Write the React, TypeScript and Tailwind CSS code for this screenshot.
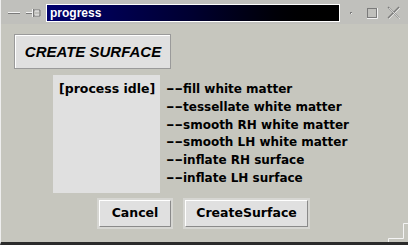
import React from "react";

const body = { fontFamily: '"DejaVu Sans", Verdana, sans-serif' };
const sans = { fontFamily: '"Liberation Sans", Arial, sans-serif' };

const steps = [
  "fill white matter",
  "tessellate white matter",
  "smooth RH white matter",
  "smooth LH white matter",
  "inflate RH surface",
  "inflate LH surface",
];

const BevelButton = ({ label, width }: { label: string; width: string }) => {
  return (
    <div className={`p-[2px] bg-[#d6d6d2] ${width}`}>
      <div className="h-[27px] flex items-center justify-center bg-[#e0e0e0] border-t border-l border-white border-r border-b border-r-[#8a8a8a] border-b-[#8a8a8a] text-[12.5px] font-bold text-black">
        {label}
      </div>
    </div>
  );
};

const App = () => {
  return (
    <div
      className="relative w-[408px] h-[245px] overflow-hidden flex flex-col bg-[#c0c0bc] border-l border-l-[#eeeeee] border-b-[3px] border-b-[#2b2b2b]"
      style={body}
    >
      {/* title bar */}
      <div className="h-[24px] flex items-start pt-[4px] shrink-0">
        <div className="w-[45px] h-[18px] flex items-center">
          <svg width="45" height="18" viewBox="0 0 45 18">
            <rect x="7" y="8" width="12" height="1" fill="#f2f2f2" />
            <rect x="7" y="9" width="12" height="1" fill="#7a7a7a" />
            <rect x="25" y="8" width="7" height="1" fill="#f2f2f2" />
            <rect x="25" y="9" width="7" height="1" fill="#7a7a7a" />
            <rect x="31" y="5" width="2" height="8" fill="#7a7a7a" />
            <rect x="31" y="5" width="1" height="8" fill="#f2f2f2" />
            <path d="M33 6 H39 V12 H33" fill="none" stroke="#7a7a7a" strokeWidth="1" />
            <path d="M34 7 H38 M34 11 H38" stroke="#f2f2f2" strokeWidth="1" />
          </svg>
        </div>
        <div
          className="w-[294px] h-[18px] border border-white bg-gradient-to-r from-[#00006e] via-[#000030] to-[#000000] flex items-center pl-[3px] text-white text-[12px] font-bold"
          style={sans}
        >
          progress
        </div>
        <div className="flex-1 h-[18px]">
          <svg width="67" height="18" viewBox="0 0 67 18">
            <rect x="10" y="8" width="2" height="2" fill="#7a7a7a" />
            <rect x="11" y="9" width="1" height="1" fill="#f2f2f2" />
            <rect x="27.5" y="4.5" width="9" height="9" fill="none" stroke="#7a7a7a" />
            <path d="M27 14.5 H37.5 V4" fill="none" stroke="#f2f2f2" />
            <path d="M48 3 L59 14 M59 3 L48 14" stroke="#7a7a7a" strokeWidth="1.3" />
            <path d="M49 4 L60 15 M60 4 L49 15" stroke="#f2f2f2" strokeWidth="0.7" />
          </svg>
        </div>
      </div>

      {/* body */}
      <div className="flex-1 bg-[#c6c6be] pl-[13px] pt-[10px] text-black">
        <div className="w-[157px] h-[35px] border border-[#9a9a9a] bg-[#e0e0e0]">
          <div
            className="h-full flex items-center justify-center border-t border-l border-white text-[15px] font-bold italic"
            style={sans}
          >
            CREATE SURFACE
          </div>
        </div>

        <div className="flex items-start mt-[6px]">
          <div className="ml-[39px] w-[107px] h-[118px] bg-[#e0e0e0] pl-[6px] pt-[6px] text-[12.5px] leading-[15px] font-bold">
            [process idle]
          </div>
          <div className="ml-[6px] pt-[6px] text-[12px] leading-[17.8px] font-bold">
            {steps.map((s) => (
              <div key={s}>
                <span className="inline-block w-[17px] origin-left scale-x-[1.7]">--</span>
                {s}
              </div>
            ))}
          </div>
        </div>

        <div className="flex mt-[5px] ml-[83px] gap-[10px]">
          <BevelButton label="Cancel" width="w-[76px]" />
          <BevelButton label="CreateSurface" width="w-[127px]" />
        </div>
      </div>

      {/* resize corner of frame */}
      <svg className="absolute right-0 bottom-0" width="21" height="20" viewBox="0 0 21 20">
        <path d="M21 1.5 H16.5 V16.5 H1.5 V20" fill="none" stroke="#f4f4f4" strokeWidth="1" />
      </svg>
    </div>
  );
};

export default App;
